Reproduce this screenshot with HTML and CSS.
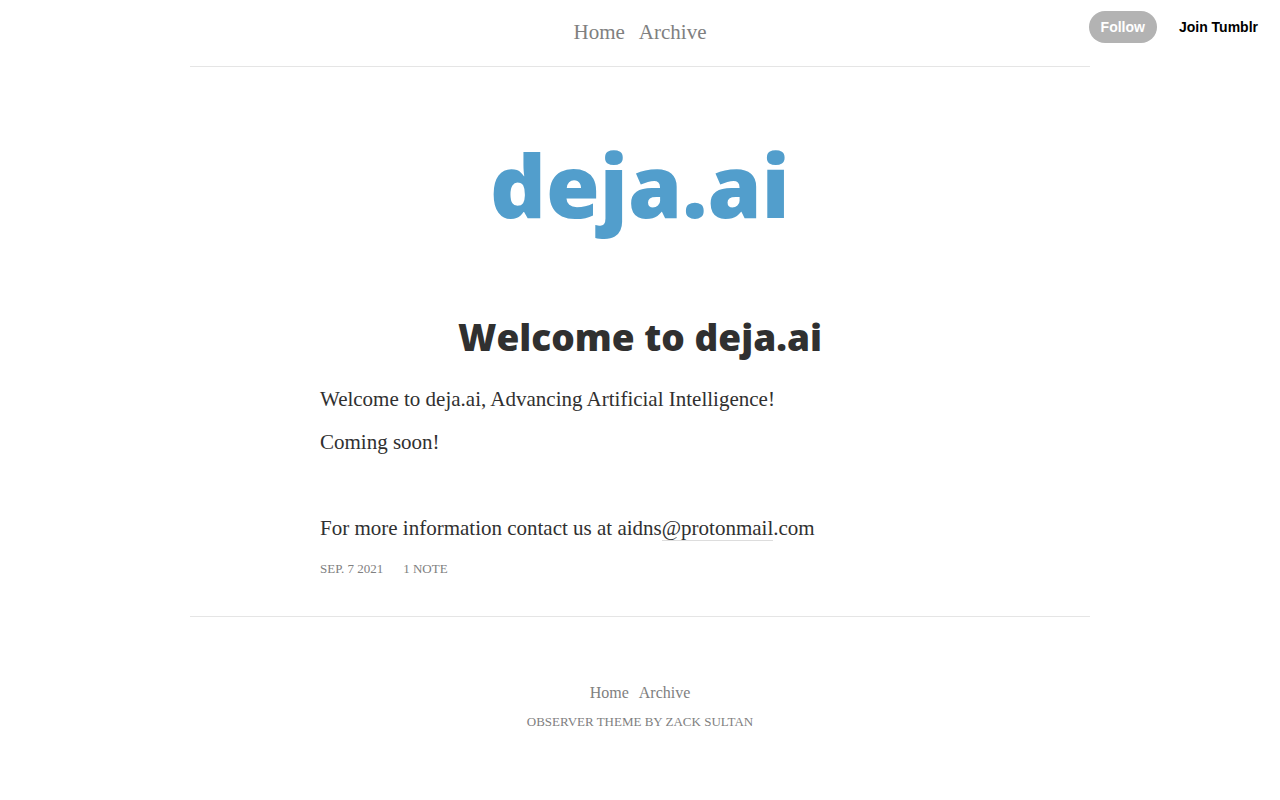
FILE: index.html
```html
<!DOCTYPE html>
<html lang="en">
<head>
<meta charset="utf-8">
<meta name="viewport" content="width=device-width, initial-scale=1">
<title>deja.ai</title>
<link rel="stylesheet" href="styles.css">
</head>
<body>
<div class="controls">
  <button class="follow" type="button">Follow</button>
  <a class="join" href="#">Join Tumblr</a>
</div>
<div class="page">
  <header class="top">
    <nav class="nav"><a href="#">Home</a><a href="#">Archive</a></nav>
  </header>
  <h1 class="site-title"><a href="#">deja.ai</a></h1>
  <main class="post">
    <h2 class="post-title"><a href="#">Welcome to deja.ai</a></h2>
    <p>Welcome to deja.ai, Advancing Artificial Intelligence!</p>
    <p>Coming soon!</p>
    <p>&nbsp;</p>
    <p>For more information contact us at aidns<a class="mention" href="#">@protonmail</a>.com</p>
    <div class="meta"><a href="#">Sep. 7 2021</a><a href="#">1 note</a></div>
  </main>
  <footer class="footer">
    <nav class="footer-nav"><a href="#">Home</a><a href="#">Archive</a></nav>
    <a class="credit" href="#">Observer Theme by Zack Sultan</a>
  </footer>
</div>
</body>
</html>
```
FILE: styles.css
```css
* { box-sizing: border-box; }
body { margin: 0; background: #fff; color: #303030; font-family: "Liberation Serif", serif; font-size: 21px; line-height: 28px; }
a { color: inherit; text-decoration: none; }
.controls { position: absolute; top: 11px; right: 22px; display: flex; align-items: center; gap: 22px; font: bold 14px/32px "Liberation Sans", Arial, sans-serif; }
.follow { height: 32px; padding: 0 12px; border: 0; border-radius: 16px; background: #b3b3b3; color: #fff; font: inherit; cursor: pointer; }
.join { color: #000; }
.page { max-width: 900px; margin: 0 auto; }
.top { padding: 18px 0 20px; border-bottom: 1px solid #e5e5e5; }
.nav { display: flex; justify-content: center; gap: 14px; color: #808080; }
.site-title { margin: 57px 0 0; color: #529ecc; font: 800 87px/120px "Open Sans", sans-serif; text-align: center; }
.post { max-width: 640px; margin: 0 auto; padding: 67px 0 35px; }
.post-title { margin: 0 0 22px; font: 800 37px/52px "Open Sans", sans-serif; text-align: center; }
.post p { margin: 0 0 15px; }
.mention { border-bottom: 1px solid #ddd; }
.meta { display: flex; gap: 20px; color: #808080; font-size: 13px; line-height: 24px; text-transform: uppercase; }
.footer { padding: 64px 0; border-top: 1px solid #e5e5e5; color: #808080; text-align: center; }
.footer-nav { display: flex; justify-content: center; gap: 10px; margin-bottom: 5px; font-size: 16px; line-height: 24px; }
.credit { display: block; font-size: 13px; line-height: 24px; text-transform: uppercase; }
```
